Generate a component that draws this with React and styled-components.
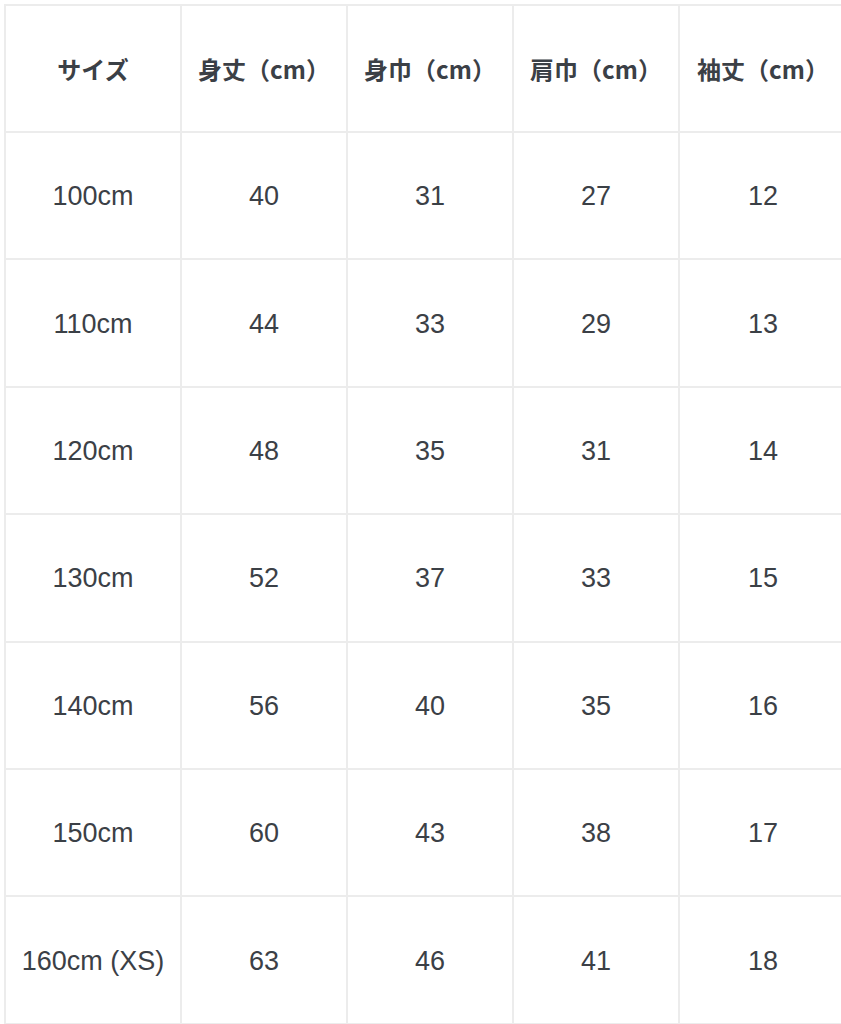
import styled, { createGlobalStyle } from 'styled-components'

const GlobalStyle = createGlobalStyle`
    html, body {
        margin: 0;
        padding: 0;
        background: #fff;
        overflow: hidden;
    }
`

const Wrap = styled.div`
    padding: 4px 0 0 4px;
    width: 841px;
    height: 1024px;
    box-sizing: border-box;
    overflow: hidden;
`

const Table = styled.table`
    border-collapse: collapse;
    table-layout: fixed;
    width: 842px;
    color: #3b4046;
`

const Col = styled.col`
    width: ${(p) => p.$w}px;
`

const Th = styled.th`
    height: 125px;
    border: 2px solid #ececec;
    font-family: "Noto Sans CJK JP", "Liberation Sans", sans-serif;
    font-size: 24px;
    font-weight: 700;
    text-align: center;
    vertical-align: middle;
    padding: 0;
`

const Td = styled.td`
    height: 123.4px;
    border: 2px solid #ececec;
    font-family: "Liberation Sans", Arial, sans-serif;
    font-size: 27px;
    font-weight: 400;
    text-align: center;
    vertical-align: middle;
    padding: 2px 0 0;
`

const colWidths = [176, 166, 166, 166, 168]

const headers = ['サイズ', '身丈（cm）', '身巾（cm）', '肩巾（cm）', '袖丈（cm）']

const rows = [
    ['100cm', 40, 31, 27, 12],
    ['110cm', 44, 33, 29, 13],
    ['120cm', 48, 35, 31, 14],
    ['130cm', 52, 37, 33, 15],
    ['140cm', 56, 40, 35, 16],
    ['150cm', 60, 43, 38, 17],
    ['160cm (XS)', 63, 46, 41, 18],
]

const App = () => {
    return (
        <Wrap>
            <GlobalStyle />
            <Table>
                <colgroup>
                    {colWidths.map((w, i) => <Col key={i} $w={w} />)}
                </colgroup>
                <thead>
                    <tr>
                        {headers.map((h) => <Th key={h}>{h}</Th>)}
                    </tr>
                </thead>
                <tbody>
                    {
                        rows.map((row) => (
                            <tr key={row[0]}>
                                {row.map((cell, i) => <Td key={i}>{cell}</Td>)}
                            </tr>
                        ))
                    }
                </tbody>
            </Table>
        </Wrap>
    )
}

export default App
